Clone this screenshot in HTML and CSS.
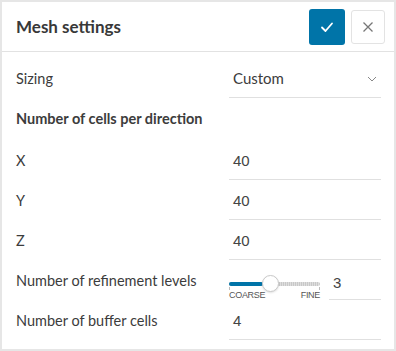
FILE: index.html
```html
<!DOCTYPE html>
<html lang="en">
<head>
    <meta charset="UTF-8">
    <meta name="viewport" content="width=device-width, initial-scale=1.0">
    <title>Mesh settings</title>
    <link rel="stylesheet" href="styles.css">
</head>

<body>
    <div class="panel">
        <div class="panel-header">
            <h2>Mesh settings</h2>
            <button class="btn btn-apply" title="Apply">
                <svg width="14" height="14" viewBox="0 0 14 14"><path d="M2 7.5 L5.5 11 L12 3.5" fill="none" stroke="#fff" stroke-width="1.8" stroke-linecap="round" stroke-linejoin="round"/></svg>
            </button>
            <button class="btn btn-close" title="Close">
                <svg width="12" height="12" viewBox="0 0 12 12"><path d="M1.5 1.5 L10.5 10.5 M10.5 1.5 L1.5 10.5" fill="none" stroke="#777" stroke-width="1.3"/></svg>
            </button>
        </div>

        <div class="panel-body">
            <div class="row">
                <label>Sizing</label>
                <div class="field select">
                    <span>Custom</span>
                    <svg width="10" height="6" viewBox="0 0 10 6"><path d="M1 1 L5 5 L9 1" fill="none" stroke="#888" stroke-width="1"/></svg>
                </div>
            </div>

            <div class="section-title">Number of cells per direction</div>

            <div class="row">
                <label>X</label>
                <div class="field"><span class="value">40</span></div>
            </div>
            <div class="row">
                <label>Y</label>
                <div class="field"><span class="value">40</span></div>
            </div>
            <div class="row">
                <label>Z</label>
                <div class="field"><span class="value">40</span></div>
            </div>

            <div class="row">
                <label>Number of refinement levels</label>
                <div class="slider-field">
                    <div class="slider">
                        <div class="track">
                            <div class="track-fill"></div>
                            <div class="thumb"></div>
                        </div>
                        <div class="ticks"></div>
                        <div class="slider-labels">
                            <span>COARSE</span>
                            <span>FINE</span>
                        </div>
                    </div>
                    <div class="field slider-value"><span class="value">3</span></div>
                </div>
            </div>

            <div class="row">
                <label>Number of buffer cells</label>
                <div class="field"><span class="value">4</span></div>
            </div>
        </div>
    </div>
</body>
</html>
```

FILE: styles.css
```css
/* Panel shell */
body {
    margin: 0;
    font-family: 'Lato', 'Open Sans', sans-serif;
    color: #333;
    background: #fff;
}

.panel {
    width: 396px;
    height: 351px;
    box-sizing: border-box;
    border: 2px solid #e6e6e6;
    background: #fff;
}

.panel-header {
    display: flex;
    align-items: center;
    height: 49px;
    padding: 0 9px 0 14px;
    border-bottom: 1px solid #e2e2e2;
    gap: 6px;
}

.panel-header h2 {
    flex: 1;
    margin: 0;
    font-size: 17px;
    font-weight: 700;
    color: #383838;
}

.btn {
    display: flex;
    align-items: center;
    justify-content: center;
    padding: 0;
    cursor: pointer;
    border-radius: 3px;
}

.btn-apply {
    width: 36px;
    height: 36px;
    background: #0074a8;
    border: none;
}

.btn-close {
    width: 34px;
    height: 34px;
    background: #fff;
    border: 1px solid #e3e3e3;
}

/* Form rows */
.panel-body {
    padding: 6px 13px 0 14px;
}

.row {
    display: grid;
    grid-template-columns: 213px 1fr;
    align-items: center;
    height: 40px;
}

.row label {
    font-size: 14.5px;
    color: #3c3c3c;
}

.section-title {
    height: 42px;
    line-height: 42px;
    font-size: 14.5px;
    font-weight: 700;
    color: #3c3c3c;
}

.field {
    display: flex;
    align-items: center;
    height: 38px;
    margin-bottom: -2px;
    padding-left: 4px;
    border-bottom: 1px solid #e0e0e0;
    box-sizing: border-box;
}

.field .value {
    font-family: 'Liberation Sans', Arial, sans-serif;
    font-size: 15px;
    color: #444;
}

.select {
    justify-content: space-between;
    padding-right: 4px;
    font-size: 15px;
    color: #3c3c3c;
}

.select span {
    margin-top: -2px;
}

/* Refinement slider */
.slider-field {
    display: flex;
    height: 40px;
}

.slider {
    width: 91px;
    margin-top: 22px;
    align-self: flex-start;
}

.track {
    position: relative;
    height: 4px;
    border-radius: 2px;
    background: repeating-linear-gradient(90deg, #c8c8c8 0 1px, #dedede 1px 2px);
}

.track-fill {
    width: 34px;
    height: 4px;
    border-radius: 2px;
    background: #0074a8;
}

.thumb {
    position: absolute;
    left: 33px;
    top: -7px;
    width: 17px;
    height: 17px;
    box-sizing: border-box;
    border-radius: 50%;
    background: #fff;
    border: 1px solid #c9c9c9;
    box-shadow: 0 1px 2px rgba(0, 0, 0, 0.12);
}

.ticks {
    height: 3px;
    margin-top: 1px;
    border-left: 1px solid #bbb;
    border-right: 1px solid #bbb;
}

.slider-labels {
    display: flex;
    justify-content: space-between;
    font-family: 'Liberation Sans', Arial, sans-serif;
    font-size: 9px;
    letter-spacing: -0.3px;
    color: #555;
    line-height: 10px;
}

.slider-value {
    flex: 1;
    margin-left: 9px;
    height: 40px;
    margin-bottom: 0;
    padding-top: 6px;
}
```
